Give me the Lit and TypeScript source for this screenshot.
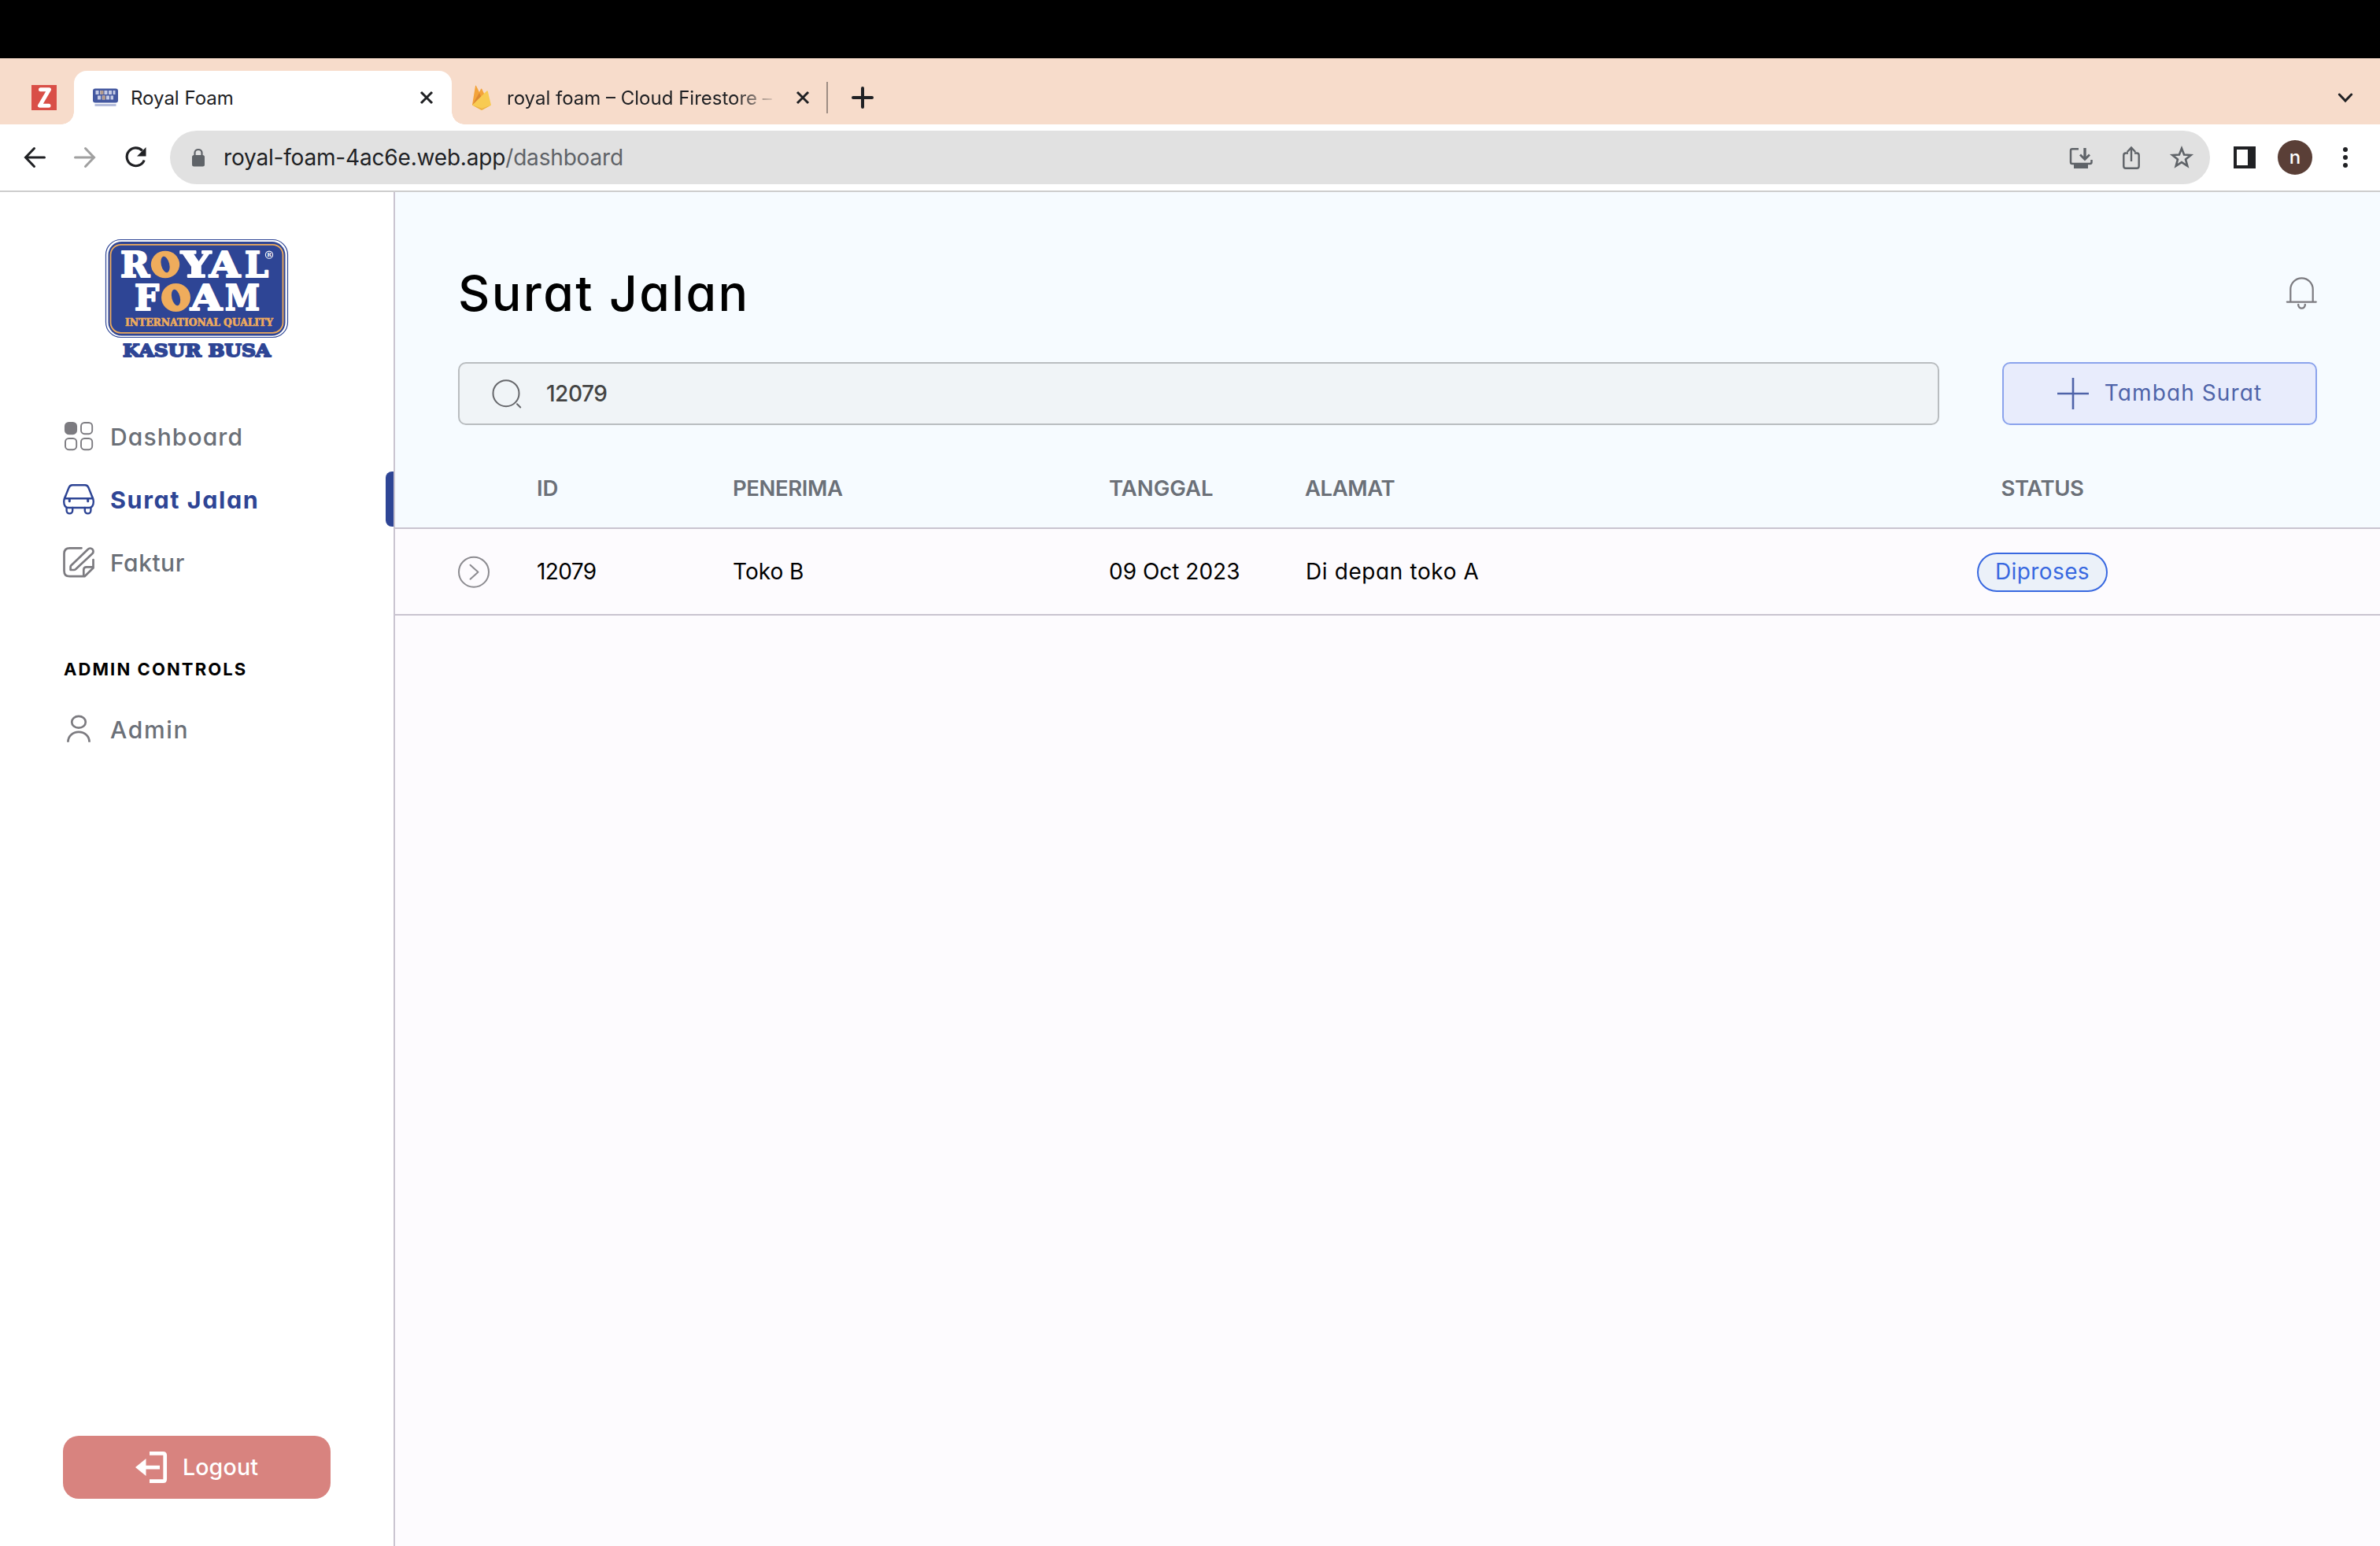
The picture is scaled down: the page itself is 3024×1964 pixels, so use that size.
import { LitElement, html, css, svg } from "lit";
import { customElement, property } from "lit/decorators.js";
import { classMap } from "lit/directives/class-map.js";

const ICONS: Record<string, unknown> = {
  dashboard: svg`<g fill="none" stroke="currentColor" stroke-width="1.9"><rect x="2.900" y="3" width="14.2" height="14.2" rx="4.4" fill="currentColor"/><rect x="23" y="3" width="14.2" height="14.2" rx="4.4"/><rect x="3" y="23" width="14.2" height="14.2" rx="4.4"/><rect x="23" y="23" width="14.2" height="14.2" rx="4.4"/></g>`,
  car: svg`<g fill="none" stroke="currentColor" stroke-width="2.4" stroke-linecap="round" stroke-linejoin="round"><path d="M2 19.2 7.3 6C8.3 3.4 9.3 2.3 12 2.3h16c2.7 0 3.7 1.1 4.7 3.7L38 19.2"/><path d="M2.5 19.200h35"/><path d="M3.2 16.5C1.8 18.8 1.2 20.6 1.2 23.2c0 4.6 2 7.8 6 7.8h25.6c4 0 6-3.2 6-7.8 0-2.6-.6-4.4-2-6.7"/><path d="M8.300 19.500v3.300M31.700 19.500v3.300" stroke-width="3"/><path d="M4.600 31v3.600a3.800 3.800 0 0 0 7.600 0V31M27.800 31v3.600a3.800 3.800 0 0 0 7.600 0V31"/></g>`,
  edit: svg`<g fill="none" stroke="currentColor" stroke-width="2.7" stroke-linecap="round" stroke-linejoin="round"><path d="M23.500 2.300H8.500Q1.500 2.300 1.500 9.300V31.200q0 7 7 7H27.500L38.500 27.500V17"/><path d="M26.300 37.500V30q0-3.700 3.700-3.700h8"/><path d="M10 24.800 31.800 3.700a3.900 3.900 0 0 1 5.600 5.500L16 29.200q-.9.800-2 .8H9.600V26q0-.7.400-1.200z"/></g>`,
  user: svg`<g fill="none" stroke="currentColor" stroke-width="2.7"><ellipse cx="20" cy="11.2" rx="8.800" ry="7.400"/><path d="M6.400 36.800C6.400 29.200 12.400 23.800 20 23.800S33.600 29.200 33.600 36.800"/></g>`,
  logout: svg`<path d="M18 2.300h17.200q2.500 0 2.500 2.500v30.400q0 2.500-2.500 2.500H18" fill="none" stroke="currentColor" stroke-width="4.700"/><path d="M0 20 13.500 9v8.800H31v4.600H13.500V31z" fill="currentColor"/>`,
  search: svg`<g fill="none" stroke="currentColor" stroke-width="2" stroke-linecap="round"><circle cx="19" cy="18.700" r="16.500"/><path d="m33 32.200 4.200 4.300"/></g>`,
  bell: svg`<g fill="none" stroke="currentColor" stroke-width="2.200" stroke-linecap="round"><path d="M6.300 31V15.500a14.200 14.200 0 0 1 28.400 0V31"/><path d="M1.800 31.600h37"/><path d="M16.200 35v.3a4.300 4.300 0 0 0 8.600 0V35" stroke-width="2.400"/></g>`,
  plus: svg`<path d="M20 0v40M0 20h40" stroke="currentColor" stroke-width="2.600"/>`,
  open: svg`<g fill="none" stroke="currentColor" stroke-width="2"><circle cx="20" cy="20.700" r="19"/><path d="m15.500 11.700 10 9-10 9" stroke-linecap="round" stroke-linejoin="round"/></g>`,
  back: svg`<path d="M32.500 20H9M19.500 8.500 8.500 20l11 11.500" fill="none" stroke="currentColor" stroke-width="3" stroke-linecap="round"/>`,
  forward: svg`<path d="M7.500 20H31M20.500 8.500 31.500 20l-11 11.500" fill="none" stroke="currentColor" stroke-width="3" stroke-linecap="round"/>`,
  reload: svg`<path d="M28.800 11.400A11.400 11.400 0 1 0 31.200 23.500" fill="none" stroke="currentColor" stroke-width="3.200"/><path d="M33.500 7v11.500H22z" fill="currentColor"/>`,
  lock: svg`<rect x="12" y="17" width="16" height="14.500" rx="2.500" fill="currentColor"/><path d="M15.500 18v-4a4.500 4 0 0 1 9 0v4" fill="none" stroke="currentColor" stroke-width="2.200"/>`,
  install: svg`<g fill="none" stroke="currentColor" stroke-width="2.500"><path d="M17 9.200H9q-2 0-2 2V26q0 2 2 2h22.500q2 0 2-2v-3"/><path d="M25 8v13.500" stroke-width="3.400"/><path d="m19 16.500 6 6 6-6" stroke-width="2.800"/></g><path d="M11 28h18v6H11z" fill="currentColor"/>`,
  share: svg`<g fill="none" stroke="currentColor" stroke-width="2.400"><path d="M16 14.500h-3q-2.700 0-2.700 2.700V31q0 2.700 2.700 2.700h14q2.700 0 2.700-2.700V17.200q0-2.700-2.700-2.700h-3"/><path d="M20 25V8M14.800 13 20 7.500l5.200 5.500"/></g>`,
  star: svg`<path d="m20 8.500 3.100 8 8.600.5-6.700 5.400 2.300 8.400L20 26.100l-7.300 4.700 2.300-8.400L8.300 17l8.600-.5z" fill="none" stroke="currentColor" stroke-width="2.600"/>`,
  panel: svg`<path d="M6 6h28v28H6z M10 10v20h14V10z" fill="currentColor" fill-rule="evenodd"/>`,
  dots: svg`<g fill="currentColor"><circle cx="20" cy="10" r="3"/><circle cx="20" cy="20" r="3"/><circle cx="20" cy="30" r="3"/></g>`,
  close: svg`<path d="m13 13 14 14M27 13 13 27" stroke="currentColor" stroke-width="3"/>`,
  add: svg`<path d="M20 8v24M8 20h24" stroke="currentColor" stroke-width="4" stroke-linecap="round"/>`,
  chevron: svg`<path d="m12.300 16 7.700 8 7.700-8" fill="none" stroke="currentColor" stroke-width="3" stroke-linecap="round"/>`,
};

@customElement("ui-icon")
class UiIcon extends LitElement {
  @property() name = "";
  static styles = css`
    :host { display: block; width: 40px; height: 40px; flex: none; }
    svg { display: block; width: 40px; height: 40px; overflow: visible; }
  `;
  render() {
    return html`<svg viewBox="0 0 40 40">${ICONS[this.name]}</svg>`;
  }
}

@customElement("royal-logo")
class RoyalLogo extends LitElement {
  static styles = css`
    :host { display: block; width: 232px; height: 154px; flex: none; }
    svg { display: block; overflow: visible; }
    text { font-family: "DejaVu Serif", serif; font-weight: 700; }
    .word { font-size: 44px; fill: #fff; stroke: #fff; stroke-width: 2.2px; stroke-linejoin: round; }
    .tag { font-size: 12.5px; fill: #efac5c; stroke: #efac5c; stroke-width: 0.6px; }
    .sub { font-size: 21.5px; fill: #2e4595; stroke: #2e4595; stroke-width: 1.8px; stroke-linejoin: round; }
    .reg { font-size: 7px; fill: #fff; }
  `;
  render() {
    return html`<svg width="232" height="154" viewBox="0 0 232 154">
      <rect x=".5" y=".5" width="231" height="124" rx="19" fill="#fff" stroke="#2e4595" stroke-width="1.2"/>
      <rect x="3.5" y="3" width="225" height="119.5" rx="17" fill="#2e4595"/>
      <rect x="6.5" y="6.8" width="219" height="112" rx="13" fill="none" stroke="#efac5c" stroke-width="1.8"/>
      <text class="word" x="19" y="48" textLength="37" lengthAdjust="spacingAndGlyphs">R</text>
      <ellipse cx="76" cy="32" rx="18.2" ry="17.3" fill="#efac5c"/>
      <ellipse cx="76" cy="32" rx="5.2" ry="10.5" fill="#2e4595" transform="rotate(-14 76 32)"/>
      <text class="word" x="96" y="48" textLength="38" lengthAdjust="spacingAndGlyphs">Y</text>
      <text class="word" x="132" y="48" textLength="39" lengthAdjust="spacingAndGlyphs">A</text>
      <text class="word" x="177" y="48" textLength="30" lengthAdjust="spacingAndGlyphs">L</text>
      <circle cx="208" cy="19.7" r="4.6" fill="none" stroke="#fff" stroke-width="1.1"/>
      <text class="reg" x="205.3" y="22.3">R</text>
      <text class="word" x="37" y="90" textLength="31" lengthAdjust="spacingAndGlyphs">F</text>
      <ellipse cx="89.5" cy="74" rx="18.5" ry="18" fill="#efac5c"/>
      <ellipse cx="89.5" cy="74" rx="5.2" ry="10.5" fill="#2e4595" transform="rotate(-14 89.5 74)"/>
      <text class="word" x="108" y="90" textLength="40" lengthAdjust="spacingAndGlyphs">A</text>
      <text class="word" x="152" y="90" textLength="44" lengthAdjust="spacingAndGlyphs">M</text>
      <text class="tag" x="25" y="109.8" textLength="188" lengthAdjust="spacingAndGlyphs">INTERNATIONAL QUALITY</text>
      <text class="sub" x="22" y="148.6" textLength="188" lengthAdjust="spacingAndGlyphs">KASUR BUSA</text>
    </svg>`;
  }
}

@customElement("browser-chrome")
class BrowserChrome extends LitElement {
  static styles = css`
    :host { display: block; flex: none; font-family: Inter, "Liberation Sans", sans-serif; color: #202124; }
    .notch { height: 74px; background: #000; }
    .strip { height: 84px; box-sizing: border-box; background: #f7dccb; display: flex; align-items: center; padding: 16px 24px 0 40px; }
    .pinned { width: 32px; height: 32px; flex: none; }
    .tab { position: relative; box-sizing: border-box; width: 480px; height: 68px; margin-left: 22px; padding: 0 12px 0 24px; background: #fff; border-radius: 16px 16px 0 0; display: flex; align-items: center; }
    .tab::before, .tab::after { content: ""; position: absolute; bottom: 0; width: 16px; height: 16px; }
    .tab::before { left: -16px; background: radial-gradient(circle at 0 0, transparent 15.5px, #fff 16px); }
    .tab::after { right: -16px; background: radial-gradient(circle at 100% 0, transparent 15.5px, #fff 16px); }
    .fav { width: 32px; height: 32px; flex: none; margin-right: 16px; }
    .title { flex: 1; font-size: 24px; white-space: nowrap; overflow: hidden; }
    .idle { display: flex; align-items: center; width: 444px; height: 68px; margin-left: 22px; }
    .faded { -webkit-mask-image: linear-gradient(90deg, #000 290px, transparent 345px); mask-image: linear-gradient(90deg, #000 290px, transparent 345px); }
    .sep { width: 2px; height: 40px; background: #9e8d83; margin: 0 24px 0 10px; }
    .grow { flex: 1; }
    .bar { height: 84px; background: #fff; border-bottom: 2px solid #cdcdcd; display: flex; align-items: center; padding: 0 24px; }
    .fwd { color: #a0a0a0; margin-left: 24px; }
    .rel { margin-left: 24px; }
    .omni { width: 2592px; height: 68px; box-sizing: border-box; border-radius: 34px; background: #e1e1e1; margin-left: 24px; display: flex; align-items: center; padding: 0 16px; color: #5f6368; }
    .url { font-size: 28px; margin-left: 12px; white-space: nowrap; flex: 1; letter-spacing: -0.18px; }
    .host { color: #202124; }
    .tools { display: flex; gap: 24px; }
    .panel { margin-left: 24px; }
    .avatar { width: 44px; height: 44px; box-sizing: border-box; border-radius: 50%; background: #5a3f37; color: #fff; display: flex; align-items: center; justify-content: center; font-size: 24px; font-weight: 500; margin: 0 22px; padding-bottom: 2px; }
  `;
  render() {
    return html`
      <div class="notch"></div>
      <div class="strip">
        <svg class="pinned" viewBox="0 0 32 32"><path d="M0 0h32v32H0z" fill="#d94f47"/><path d="M11.5 5.8h11L10.5 26.200h11.500" fill="none" stroke="#fff" stroke-width="5" stroke-linejoin="round" stroke-linecap="round"/></svg>
        <div class="tab">
          <svg class="fav" viewBox="0 0 32 32"><rect y="4.500" width="32" height="18" rx="3" fill="#4458a0"/><path d="M3.500 9.500h25M6 16h20" stroke="#c5cbe4" stroke-width="5" stroke-dasharray="4 1.500"/><path d="M9.500 9.500h4M12 16h4" stroke="#b39a8c" stroke-width="5"/><path d="M2.500 25.500h27" stroke="#b5bddc" stroke-width="3"/></svg>
          <span class="title">Royal Foam</span>
          <ui-icon name="close"></ui-icon>
        </div>
        <div class="idle">
          <svg class="fav" viewBox="0 0 32 32"><path d="M4 25.500 8 1q.4-1 1 0l4 8 2-4q.7-1 1.300 0L26 26z" fill="#f3a33a"/><path d="m4 25.500 9-15.500 4 8z" fill="#dd8732"/><path d="M4 25.500 22.500 7.500q1-.7 1.300.5L28 25.500 17 31.400q-1 .6-2 0z" fill="#f8cb52"/><path d="M4 25.500 15 31.400q1 .6 2 0L28 25.500 16.500 29.800z" fill="#eeb144"/></svg>
          <span class="title faded">royal foam – Cloud Firestore –</span>
          <ui-icon name="close"></ui-icon>
        </div>
        <div class="sep"></div>
        <ui-icon name="add"></ui-icon>
        <span class="grow"></span>
        <ui-icon name="chevron"></ui-icon>
      </div>
      <div class="bar">
        <ui-icon name="back"></ui-icon>
        <ui-icon class="fwd" name="forward"></ui-icon>
        <ui-icon class="rel" name="reload"></ui-icon>
        <div class="omni">
          <ui-icon name="lock"></ui-icon>
          <span class="url"><span class="host">royal-foam-4ac6e.web.app</span>/dashboard</span>
          <div class="tools"><ui-icon name="install"></ui-icon><ui-icon name="share"></ui-icon><ui-icon name="star"></ui-icon></div>
        </div>
        <ui-icon class="panel" name="panel"></ui-icon>
        <div class="avatar">n</div>
        <ui-icon name="dots"></ui-icon>
      </div>
    `;
  }
}

interface NavItem { icon: string; label: string; cls: string; active?: boolean }

@customElement("side-nav")
class SideNav extends LitElement {
  private items: NavItem[] = [
    { icon: "dashboard", label: "Dashboard", cls: "dashboard" },
    { icon: "car", label: "Surat Jalan", cls: "surat", active: true },
    { icon: "edit", label: "Faktur", cls: "faktur" },
  ];
  static styles = css`
    :host { display: flex; flex-direction: column; box-sizing: border-box; width: 502px; flex: none; background: #fff; border-right: 2px solid #c9c4d0; padding: 60px 0; }
    royal-logo { align-self: center; margin-bottom: 56px; }
    .item { height: 80px; display: flex; align-items: center; padding-left: 80px; gap: 20px; font-size: 30px; font-weight: 500; color: #6b7078; }
    ui-icon { color: #7c7b80; }
    .label { padding-top: 2px; }
    .dashboard { letter-spacing: 1.1px; }
    .surat { letter-spacing: 1.6px; font-size: 30.5px; }
    .faktur { letter-spacing: 0.5px; }
    .admin-label { letter-spacing: 1.7px; }
    .item.active { color: #2e4595; font-weight: 700; }
    .item.active ui-icon { color: #2e4595; }
    .item.active::after { content: ""; width: 10px; height: 70px; margin-left: auto; border-radius: 8px 0 0 8px; background: #2e4595; }
    .section { margin: 80px 0 0; padding-left: 81px; height: 32px; line-height: 32px; font-size: 22px; font-weight: 700; letter-spacing: 2.1px; color: #000; }
    .admin { margin-top: 20px; }
    .logout { margin: auto 80px 0; height: 80px; border-radius: 20px; background: #d8837f; color: #fff; display: flex; align-items: center; justify-content: center; gap: 20px; font-size: 28.5px; font-weight: 500; letter-spacing: 0.2px; }
    .logout ui-icon { color: #fff; }
  `;
  render() {
    return html`
      <royal-logo></royal-logo>
      ${this.items.map((i) => html`<div class=${classMap({ item: true, active: !!i.active })}><ui-icon name=${i.icon}></ui-icon><span class="label ${i.cls}">${i.label}</span></div>`)}
      <div class="section">ADMIN CONTROLS</div>
      <div class="item admin"><ui-icon name="user"></ui-icon><span class="label admin-label">Admin</span></div>
      <div class="logout"><ui-icon name="logout"></ui-icon><span>Logout</span></div>
    `;
  }
}

@customElement("delivery-page")
class DeliveryPage extends LitElement {
  static styles = css`
    :host { display: flex; flex-direction: column; flex: 1; background: #fdfbfe; color: #000; }
    .top { background: #f6fbff; border-bottom: 2px solid #c9c4d0; padding: 88px 80px 20px; }
    .heading { display: flex; align-items: center; justify-content: space-between; height: 80px; color: #7c7b80; }
    h1 { margin: 0; font-size: 62.5px; font-weight: 500; line-height: 80px; letter-spacing: 2.4px; color: #000; }
    .controls { display: flex; gap: 80px; margin-top: 48px; }
    .search { flex: 1; box-sizing: border-box; height: 80px; border: 2px solid #b9bdc0; border-radius: 10px; background: #f0f4f7; display: flex; align-items: center; gap: 30px; padding: 1px 0 0 40px; font-size: 28px; font-weight: 500; letter-spacing: -0.5px; color: #444; }
    .search ui-icon { color: #66676b; }
    .add { width: 400px; box-sizing: border-box; height: 80px; border: 2px solid #8ba3ec; border-radius: 10px; background: #e8ecfc; color: #4f64a9; display: flex; align-items: center; justify-content: center; gap: 20px; font-size: 28px; letter-spacing: 1.1px; }
    .grid { display: grid; grid-template-columns: 100px 249px 478px 249px 838px 198px; align-items: center; }
    .head { height: 60px; margin-top: 50px; font-size: 27.5px; font-weight: 600; color: #6b7078; }
    .tight { letter-spacing: -0.4px; }
    .row { height: 108px; padding: 0 80px; border-bottom: 2px solid #c9c4d0; font-size: 28px; }
    .cell { padding-top: 2px; }
    .id { letter-spacing: -0.6px; }
    .address { letter-spacing: 0.6px; padding-left: 1px; }
    .row ui-icon { color: #8c8b90; }
    .mid { text-align: center; justify-self: center; }
    .badge { box-sizing: border-box; width: 166px; height: 50px; margin-top: 1px; border: 2px solid #3868e0; border-radius: 25px; background: #ebf1f9; color: #3868e0; letter-spacing: 0.4px; display: flex; align-items: center; justify-content: center; }
  `;
  render() {
    return html`
      <div class="top">
        <div class="heading"><h1>Surat Jalan</h1><ui-icon name="bell"></ui-icon></div>
        <div class="controls">
          <div class="search"><ui-icon name="search"></ui-icon><span>12079</span></div>
          <div class="add"><ui-icon name="plus"></ui-icon><span>Tambah Surat</span></div>
        </div>
        <div class="grid head">
          <span></span><span>ID</span><span class="tight">PENERIMA</span><span>TANGGAL</span><span class="tight">ALAMAT</span><span class="mid tight">STATUS</span>
        </div>
      </div>
      <div class="grid row">
        <ui-icon name="open"></ui-icon><span class="cell id">12079</span><span class="cell">Toko B</span><span class="cell">09 Oct 2023</span><span class="cell address">Di depan toko A</span><div class="badge mid">Diproses</div>
      </div>
    `;
  }
}

@customElement("app-root")
class AppRoot extends LitElement {
  static styles = css`
    :host { display: flex; flex-direction: column; width: 100%; height: 1964px; overflow: hidden; background: #fff; }
    .body { flex: 1; display: flex; min-height: 0; font-family: Inter, "Noto Sans", sans-serif; font-feature-settings: "cv11" 1; line-height: 1.2; }
  `;
  render() {
    return html`<browser-chrome></browser-chrome><div class="body"><side-nav></side-nav><delivery-page></delivery-page></div>`;
  }
}
